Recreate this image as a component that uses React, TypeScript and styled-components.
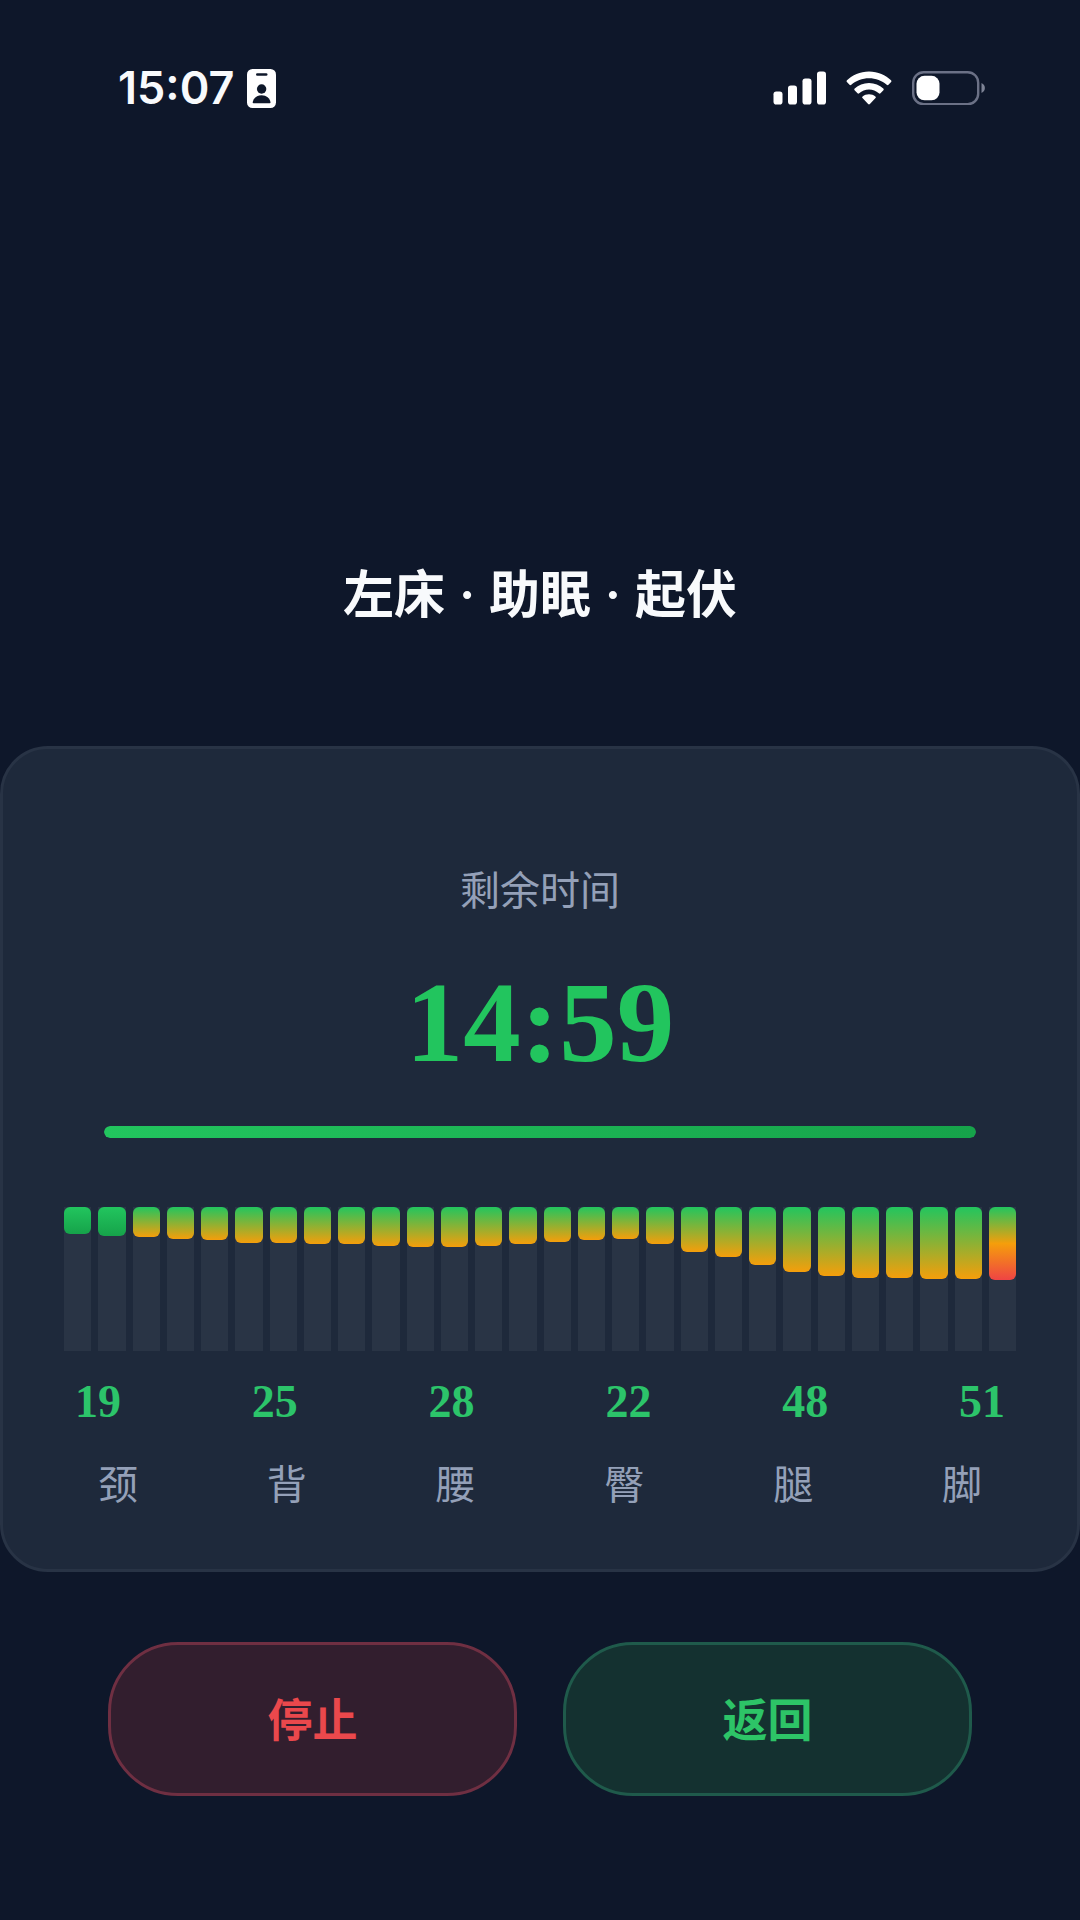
import React from "react";
import styled, { createGlobalStyle } from "styled-components";

const sans = `"Liberation Sans", "Noto Sans CJK SC", sans-serif`;
const serif = `"Liberation Serif", "Noto Sans CJK SC", serif`;

const GlobalStyle = createGlobalStyle`
  *, *::before, *::after { box-sizing: border-box; }
  html, body { margin: 0; background: #0e172a; }
  body { font-family: ${sans}; color: #f8fafc; }
`;

const Screen = styled.div`
  display: flex;
  flex-direction: column;
  min-height: 100vh;
  background: #0e172a;
`;

const StatusBar = styled.header`
  display: flex;
  align-items: center;
  justify-content: space-between;
  padding: 60px 95px 0 118px;
`;

const StatusGroup = styled.div<{ $gap: number }>`
  display: flex;
  align-items: center;
  gap: ${({ $gap }) => $gap}px;
  height: 56px;
`;

const Clock = styled.time`
  font: 600 45px/56px Inter, ${sans};
`;

const Title = styled.h1`
  margin: 449px 0 121px;
  font-family: Inter, "Noto Sans CJK SC", sans-serif;
  font-size: 51px;
  line-height: 60px;
  font-weight: 600;
  text-align: center;
`;

const Dot = styled.span`
  margin: 0 1px;
`;

const Card = styled.main`
  display: flex;
  flex-direction: column;
  padding: 112px 61px 54px;
  border: 3px solid #283345;
  border-radius: 48px;
  background: #1e293b;
`;

const Caption = styled.p`
  margin: 0;
  font-size: 40px;
  line-height: 60px;
  text-align: center;
  color: #94a0b8;
`;

const Countdown = styled.div`
  margin: 42px 0 43px;
  font: 700 115px/120px ${serif};
  text-align: center;
  color: #22c55e;
`;

const Track = styled.div`
  height: 12px;
  margin: 0 40px 69px;
  border-radius: 6px;
  overflow: hidden;
  background: #2a3546;
`;

const TrackFill = styled.div`
  height: 100%;
  border-radius: 6px;
  background: linear-gradient(90deg, #22c55e, #16a34a);
`;

const Chart = styled.div`
  display: flex;
  gap: 7px;
  height: 144px;
  margin-bottom: 23px;
`;

const Column = styled.div`
  flex: 1;
  background: #293445;
`;

type Level = "low" | "mid" | "high";

const fills: Record<Level, string> = {
  low: "#22c55e, #16a34a",
  mid: "#22c55e, #f59e0b",
  high: "#22c55e, #f59e0b 50%, #ef4444",
};

const Bar = styled.div<{ $level: Level }>`
  border-radius: 6px;
  background: linear-gradient(180deg, ${({ $level }) => fills[$level]});
`;

const Row = styled.div<{ $inset: number }>`
  display: flex;
  justify-content: space-between;
  padding: 0 ${({ $inset }) => $inset}px;
`;

const Value = styled.span`
  margin-bottom: 25px;
  font: 700 46px/56px ${serif};
  color: #2cc46a;
`;

const Part = styled.span`
  font-size: 40px;
  line-height: 60px;
  color: #94a0b8;
`;

const Actions = styled.footer`
  display: flex;
  gap: 46px;
  padding: 70px 10% 0;
`;

const ActionButton = styled.button<{ $tone: "stop" | "back" }>`
  flex: 1;
  height: 154px;
  padding: 6px 0 0;
  border: 3px solid ${({ $tone }) => ($tone === "stop" ? "#6f2f42" : "#1f5a4b")};
  border-radius: 70px;
  background: ${({ $tone }) => ($tone === "stop" ? "#321e2e" : "#143130")};
  color: ${({ $tone }) => ($tone === "stop" ? "#ea484c" : "#2dc467")};
  font: 600 45px/60px ${sans};
  cursor: pointer;
`;

const pressures = [
  19, 20, 21, 22, 23, 25, 25, 26, 26, 27, 28, 28, 27, 26,
  24, 23, 22, 26, 31, 35, 40, 45, 48, 49, 49, 50, 50, 51,
];
const values = [19, 25, 28, 22, 48, 51];
const parts = ["颈", "背", "腰", "臀", "腿", "脚"];

const levelOf = (v: number): Level => (v > 50 ? "high" : v > 20 ? "mid" : "low");

const BadgeIcon = () => (
  <svg width="29" height="39" viewBox="0 0 29 39" aria-hidden="true">
    <rect width="29" height="39" rx="5.5" fill="#fff" />
    <rect x="9" y="4.2" width="11.5" height="2.6" rx="1.3" fill="#0e172a" />
    <circle cx="14.6" cy="20" r="4.7" fill="#0e172a" />
    <path d="M6.5 34.3c-.6 0-.9-.4-.8-1 .7-4 4-7 8.900-7s8.200 3 8.900 7c.1.6-.2 1-.8 1z" fill="#0e172a" />
  </svg>
);

const SignalIcon = () => (
  <svg width="53" height="34" viewBox="0 0 53 34" fill="#fff" aria-hidden="true">
    <rect x="0.5" y="20.500" width="9" height="13" rx="2.800" />
    <rect x="15" y="14.500" width="9" height="19" rx="2.800" />
    <rect x="29.500" y="7.500" width="9" height="26" rx="2.800" />
    <rect x="44" y="0.500" width="9" height="33" rx="2.800" />
  </svg>
);

const WifiIcon = () => (
  <svg width="46" height="34" viewBox="0 0 46 34" fill="#fff" aria-hidden="true">
    <path d="M23 .5C32 .5 39.800 4 45 9.300c.6.600.6 1.200.1 1.800l-2.600 2.700c-.6.600-1.200.600-1.800 0C36 9.600 29.800 7.200 23 7.200S10 9.600 5.300 13.800c-.6.600-1.200.600-1.800 0L.9 11.100c-.5-.6-.5-1.200.1-1.800C6.200 4 14 .5 23 .5z" />
    <path d="M23 12c5.600 0 10.600 2.100 14.300 5.500.6.600.6 1.200.1 1.800l-2.900 2.900c-.6.600-1.100.600-1.700.1C30.100 20 26.800 18.600 23 18.600s-7.100 1.400-9.800 3.700c-.6.500-1.100.500-1.700-.1l-2.900-2.900c-.5-.6-.5-1.200.1-1.800C12.400 14.100 17.400 12 23 12z" />
    <path d="M23 23.200c2.500 0 4.700.8 6.400 2.200.6.500.6 1.100.1 1.700l-5.600 5.900c-.6.600-1.200.600-1.800 0l-5.600-5.900c-.5-.6-.5-1.200.1-1.700 1.700-1.400 3.900-2.200 6.400-2.200z" />
  </svg>
);

const BatteryIcon = () => (
  <svg width="73" height="34" viewBox="0 0 73 34" aria-hidden="true">
    <rect x="1.200" y="1.200" width="65" height="32" rx="10.500" fill="none" stroke="#6b7186" strokeWidth="2.400" />
    <rect x="4.500" y="4.800" width="23" height="24.500" rx="8" fill="#fff" />
    <path d="M69.500 12c2.200 1 3.400 2.800 3.400 5s-1.200 4-3.400 5z" fill="#7d8395" />
  </svg>
);

export default function App() {
  return (
    <Screen>
      <GlobalStyle />
      <StatusBar>
        <StatusGroup $gap={13}>
          <Clock>15:07</Clock>
          <BadgeIcon />
        </StatusGroup>
        <StatusGroup $gap={20}>
          <SignalIcon />
          <WifiIcon />
          <BatteryIcon />
        </StatusGroup>
      </StatusBar>

      <Title>
        左床 <Dot>·</Dot> 助眠 <Dot>·</Dot> 起伏
      </Title>

      <Card>
        <Caption>剩余时间</Caption>
        <Countdown role="timer">14:59</Countdown>
        <Track role="progressbar" aria-label="剩余时间" aria-valuenow={100}>
          <TrackFill />
        </Track>
        <Chart>
          {pressures.map((v, i) => (
            <Column key={i}>
              <Bar $level={levelOf(v)} style={{ height: `${v}%` }} />
            </Column>
          ))}
        </Chart>
        <Row $inset={11}>
          {values.map((v, i) => (
            <Value key={i}>{v}</Value>
          ))}
        </Row>
        <Row $inset={34}>
          {parts.map((p) => (
            <Part key={p}>{p}</Part>
          ))}
        </Row>
      </Card>

      <Actions>
        <ActionButton type="button" $tone="stop">停止</ActionButton>
        <ActionButton type="button" $tone="back">返回</ActionButton>
      </Actions>
    </Screen>
  );
}
